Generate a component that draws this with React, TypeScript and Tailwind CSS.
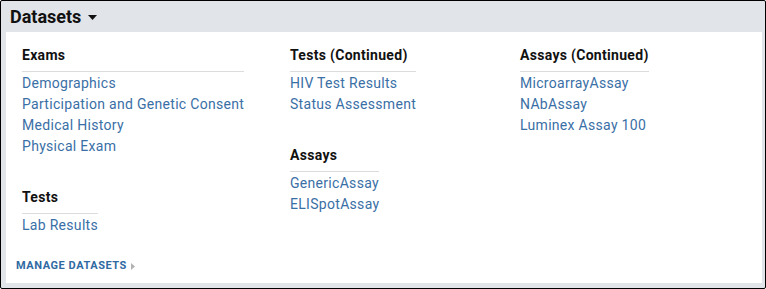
import React from "react";

const columns = [
  [
    { title: "Exams", items: ["Demographics", "Participation and Genetic Consent", "Medical History", "Physical Exam"] },
    { title: "Tests", items: ["Lab Results"] },
  ],
  [
    { title: "Tests (Continued)", items: ["HIV Test Results", "Status Assessment"] },
    { title: "Assays", items: ["GenericAssay", "ELISpotAssay"] },
  ],
  [{ title: "Assays (Continued)", items: ["MicroarrayAssay", "NAbAssay", "Luminex Assay 100"] }],
];

const widths = ["w-[268px]", "w-[230px]", "w-[200px]"];

const App = () => {
  return (
    <div
      className="w-[766px] h-[289px] border border-black rounded-[2px] bg-[#e1e5e9] flex flex-col pl-[5px] pr-[3px] pb-[5px]"
      style={{ fontFamily: "Roboto, 'Liberation Sans', sans-serif" }}
    >
      {/* Header */}
      <div className="h-[31px] flex items-center pl-[4px] shrink-0">
        <span className="text-[18px] font-bold text-[#111] leading-none">Datasets</span>
        <svg width="9" height="5" viewBox="0 0 9 5" className="ml-[7px] mt-[1px]">
          <polygon points="0,0 9,0 4.5,5" fill="#111" />
        </svg>
      </div>

      {/* Body */}
      <div className="flex-1 bg-white flex flex-col">
        <div className="flex pl-[16px] pt-[13px]">
          {columns.map((col, ci) => (
            <div key={ci} className={widths[ci]}>
              {col.map((sec, si) => (
                <div key={si} className={`w-fit ${si > 0 ? "mt-[30px]" : ""}`}>
                  <div className="text-[14px] font-bold tracking-[0.3px] text-[#111] leading-[20px] pb-[6px] border-b border-[#dcdcdc]">
                    {sec.title}
                  </div>
                  <ul className="pt-[1px]">
                    {sec.items.map((it) => (
                      <li key={it} className="text-[14px] tracking-[0.3px] leading-[21px] text-[#3a6fa6] whitespace-nowrap">
                        {it}
                      </li>
                    ))}
                  </ul>
                </div>
              ))}
            </div>
          ))}
        </div>

        <div className="mt-auto pl-[10px] pb-[9px] flex items-center">
          <span className="text-[11px] font-bold tracking-[0.55px] text-[#2f6aa3] leading-[16px]">MANAGE DATASETS</span>
          <svg width="4" height="7" viewBox="0 0 4 7" className="ml-[4px]">
            <polygon points="0,0 4,3.5 0,7" fill="#b3b3b3" />
          </svg>
        </div>
      </div>
    </div>
  );
};

export default App;
